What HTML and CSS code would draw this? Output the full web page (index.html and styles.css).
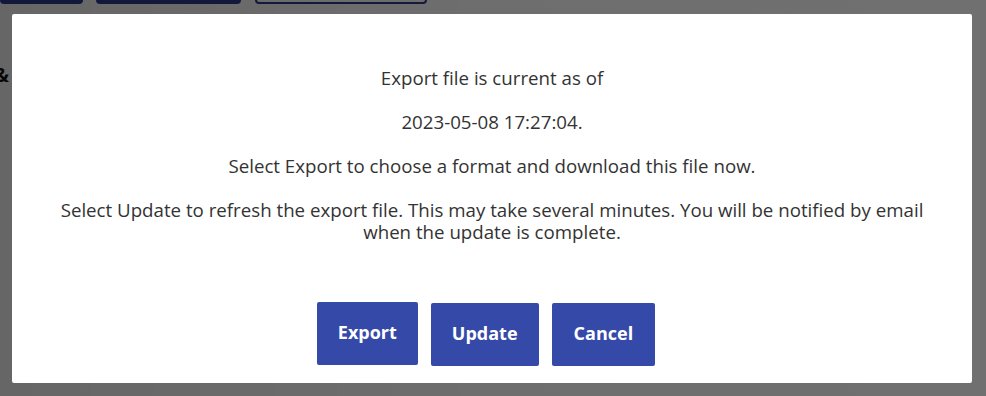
FILE: index.html
```html
<!DOCTYPE html>
<html lang="en">

<head>
    <meta charset="UTF-8">
    <title>Export</title>
    <link rel="stylesheet" href="styles.css">
</head>

<body>
    <div class="page">
        <div class="toolbar">
            <span class="tool-btn filled btn-a"></span>
            <span class="tool-btn filled btn-b"></span>
            <span class="tool-btn outline btn-c"></span>
        </div>
        <div class="page-text">&amp; <span class="dot">.</span></div>
    </div>

    <div class="overlay"></div>

    <div class="modal">
        <div class="modal-body">
            <p>Export file is current as of</p>
            <p>2023-05-08 17:27:04.</p>
            <p>Select Export to choose a format and download this file now.</p>
            <p>Select Update to refresh the export file. This may take several minutes. You will be notified by email
                when the update is complete.</p>
        </div>
        <div class="modal-actions">
            <button class="action export">Export</button>
            <button class="action">Update</button>
            <button class="action cancel">Cancel</button>
        </div>
    </div>
</body>

</html>
```

FILE: styles.css
```css
body {
    font-family: 'Open Sans', sans-serif;
    margin: 0;
    padding: 0;
    width: 986px;
    height: 396px;
    overflow: hidden;
    background-color: #fff;
}

.page {
    height: 396px;
}

.toolbar {
    display: flex;
    gap: 13px;
    margin-top: -40px;
}

.tool-btn {
    display: block;
    height: 44px;
    border-radius: 4px;
    box-sizing: border-box;
}

.filled {
    background-color: #2b3d8f;
}

.outline {
    background-color: white;
    border: 2px solid #2b3d8f;
}

.btn-a {
    width: 83px;
}

.btn-b {
    width: 145px;
}

.btn-c {
    width: 172px;
    margin-left: 1px;
}

.page-text {
    margin-top: 57px;
    margin-left: -6px;
    font-size: 20px;
    font-weight: 700;
    color: #111;
}

.dot {
    color: #e07020;
}

.overlay {
    position: absolute;
    inset: 0;
    background: linear-gradient(90deg, rgba(0, 0, 0, 0.6), rgba(0, 0, 0, 0.57) 50%, rgba(0, 0, 0, 0.56));
}

.modal {
    position: absolute;
    left: 12px;
    top: 14px;
    width: 960px;
    height: 369px;
    background-color: white;
    border-radius: 2px;
    box-sizing: border-box;
    padding: 53px 38px 17px;
    display: flex;
    flex-direction: column;
}

.modal-body {
    text-align: center;
    color: #333;
    font-size: 18.7px;
    line-height: 22px;
}

.modal-body p {
    margin: 0 0 22px;
}

.modal-actions {
    margin-top: auto;
    padding-right: 12px;
    display: flex;
    justify-content: center;
    align-items: flex-end;
    gap: 13px;
}

.action {
    height: 63px;
    padding: 0 21px 3px;
    background-color: #3549a9;
    color: white;
    border: none;
    border-radius: 2px;
    font-family: 'Open Sans', sans-serif;
    font-size: 18px;
    font-weight: 700;
}

.cancel {
    padding: 0 22px 3px;
}

.export {
    margin-bottom: 1px;
}
```
